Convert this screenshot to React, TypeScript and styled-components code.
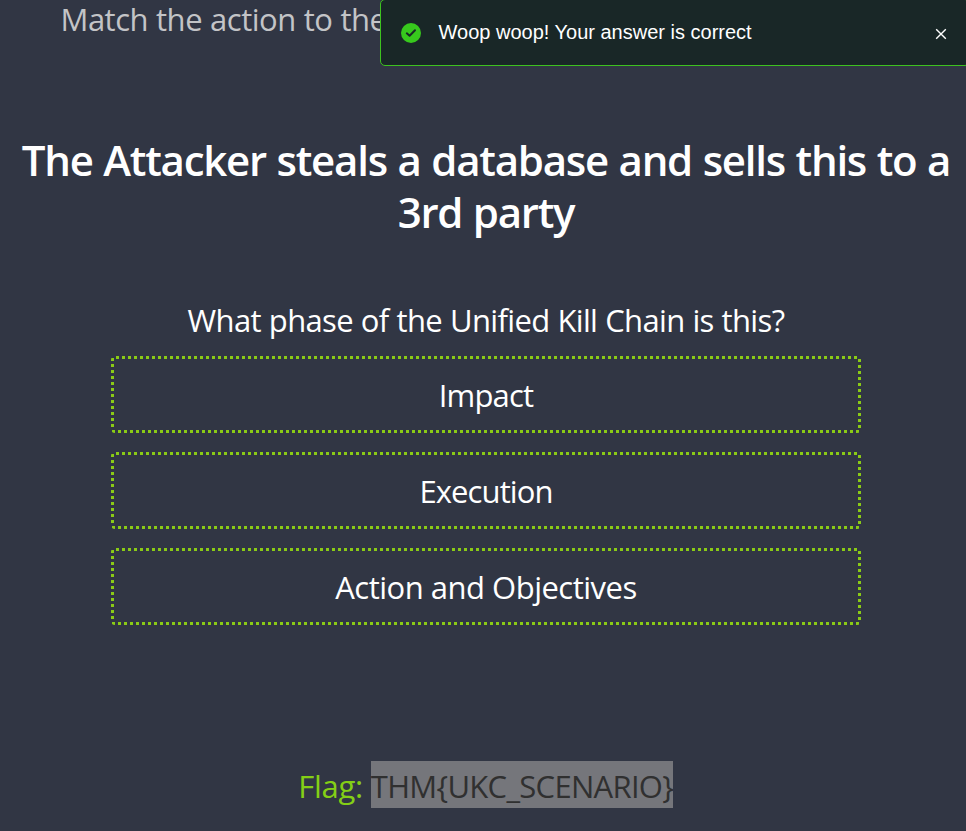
import React from "react";
import styled, { createGlobalStyle } from "styled-components";

const GlobalStyle = createGlobalStyle`
  * { box-sizing: border-box; }
  html, body { margin: 0; background: #313644; overflow: hidden; }
`;

const Page = styled.main`
  display: flex;
  flex-direction: column;
  align-items: center;
  position: relative;
  width: 966px;
  height: 831px;
  padding-left: 6px;
  overflow: hidden;
  background: #313644;
  color: #fff;
  font-family: "Open Sans", sans-serif;
  font-size: 31px;
  line-height: 44px;
  white-space: nowrap;
`;

const Intro = styled.p`
  align-self: flex-start;
  margin: -3px 0 0 54.5px;
  color: #c3c4c7;
  letter-spacing: -0.5px;
  word-spacing: 0.5px;
`;

const Title = styled.h1`
  margin: 93px 0 0;
  font-size: 42px;
  font-weight: 600;
  line-height: 52px;
  text-align: center;
  letter-spacing: -1.25px;
  word-spacing: 1px;
`;

const TitleLine = styled.span`
  display: block;
`;

const Question = styled.p`
  margin: 60px 0 0;
  height: 58px;
  line-height: 44px;
  letter-spacing: -0.65px;
  word-spacing: 0.5px;
`;

const Answers = styled.div`
  display: flex;
  flex-direction: column;
  gap: 19px;
  width: 750px;
`;

const across = "repeating-linear-gradient(90deg, #8acb16 0 3px, transparent 3px 6px)";
const down = "repeating-linear-gradient(180deg, #8acb16 0 3px, transparent 3px 6px)";

const Answer = styled.button<{ $spacing: number }>`
  height: 77px;
  padding: 1px 0 0;
  border: 0;
  border-radius: 4px;
  color: inherit;
  font: inherit;
  letter-spacing: ${(p) => p.$spacing}px;
  background:
    ${across} 5px 0 / 741px 3px no-repeat,
    ${across} 1px 74px / 747px 3px no-repeat,
    ${down} 0 2px / 3px 72px no-repeat,
    ${down} 747px 3px / 3px 71px no-repeat;
`;

const FlagRow = styled.div`
  display: flex;
  align-items: center;
  gap: 8px;
  margin: 136px 1px 0 0;
  height: 47px;
  color: #84cf16;
`;

const FlagLabel = styled.span`
  padding-top: 3px;
  letter-spacing: -0.3px;
`;

const FlagValue = styled.span`
  width: 302px;
  height: 47px;
  padding-top: 3px;
  color: #303030;
  background: #75767b;
  letter-spacing: -0.7px;
`;

const Toast = styled.aside`
  position: absolute;
  top: -1px;
  left: 380px;
  display: flex;
  align-items: center;
  width: 590px;
  height: 67px;
  padding: 0 22px 0 20px;
  border: 1px solid #3dc21f;
  border-radius: 5px;
  background: #192727;
  font-family: "Liberation Sans", Arial, sans-serif;
  font-size: 20px;
  line-height: 24px;
`;

const ToastText = styled.span`
  flex: 1;
  margin: -2px 0 0 17.5px;
`;

const Close = styled.button`
  display: flex;
  margin-top: 2px;
  padding: 0;
  border: 0;
  background: none;
`;

export default function App() {
  return (
    <>
      <GlobalStyle />
      <Page>
        <Intro>Match the action to the</Intro>
        <Title>
          <TitleLine>The Attacker steals a database and sells this to a</TitleLine>
          <TitleLine>3rd party</TitleLine>
        </Title>
        <Question>What phase of the Unified Kill Chain is this?</Question>
        <Answers>
          <Answer $spacing={-0.8}>Impact</Answer>
          <Answer $spacing={-0.9}>Execution</Answer>
          <Answer $spacing={-0.5}>Action and Objectives</Answer>
        </Answers>
        <FlagRow>
          <FlagLabel>Flag:</FlagLabel>
          <FlagValue>THM&#123;UKC_SCENARIO&#125;</FlagValue>
        </FlagRow>
        <Toast>
          <svg width="20" height="20" viewBox="0 0 20 20">
            <circle cx="10" cy="10" r="10" fill="#37c91d" />
            <path d="M5.8 10.3 8.6 12.8 14 7.2" fill="none" stroke="#192727" strokeWidth="2" strokeLinecap="round" strokeLinejoin="round" />
          </svg>
          <ToastText>Woop woop! Your answer is correct</ToastText>
          <Close aria-label="Close">
            <svg width="12" height="12" viewBox="0 0 12 12">
              <path d="m1.2 1.2 9.6 9.6M10.8 1.2 1.2 10.8" stroke="#fff" strokeWidth="1.4" />
            </svg>
          </Close>
        </Toast>
      </Page>
    </>
  );
}
